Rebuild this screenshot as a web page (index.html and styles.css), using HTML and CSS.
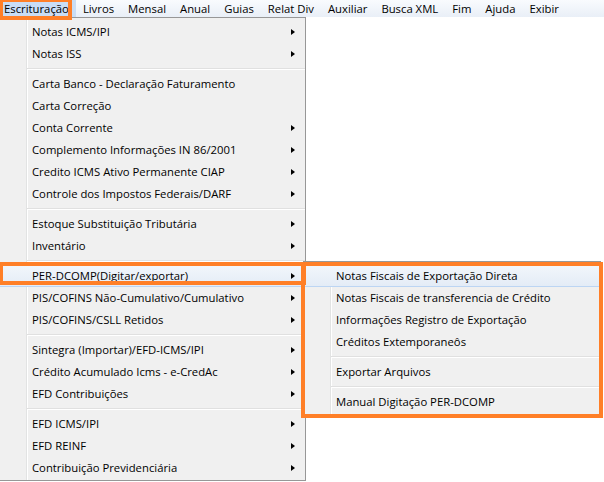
FILE: index.html
```html
<!DOCTYPE html>
<html lang="pt">
<head>
<meta charset="utf-8">
<title>Escrituração</title>
<link rel="stylesheet" href="styles.css">
</head>
<body>
<div class="app">
  <nav class="menubar">
    <span class="bar-item bar-item--active">Escrituração</span>
    <span class="bar-item">Livros</span>
    <span class="bar-item">Mensal</span>
    <span class="bar-item">Anual</span>
    <span class="bar-item">Guias</span>
    <span class="bar-item">Relat Div</span>
    <span class="bar-item">Auxiliar</span>
    <span class="bar-item">Busca XML</span>
    <span class="bar-item">Fim</span>
    <span class="bar-item">Ajuda</span>
    <span class="bar-item">Exibir</span>
  </nav>

  <div class="menu menu--main">
    <div class="row"><span class="label">Notas ICMS/IPI</span><span class="arrow"></span></div>
    <div class="row"><span class="label">Notas ISS</span><span class="arrow"></span></div>
    <div class="sep"></div>
    <div class="row"><span class="label">Carta Banco - Declaração Faturamento</span></div>
    <div class="row"><span class="label">Carta Correção</span></div>
    <div class="row"><span class="label">Conta Corrente</span><span class="arrow"></span></div>
    <div class="row"><span class="label">Complemento Informações IN 86/2001</span><span class="arrow"></span></div>
    <div class="row"><span class="label">Credito ICMS Ativo Permanente CIAP</span><span class="arrow"></span></div>
    <div class="row"><span class="label">Controle dos Impostos Federais/DARF</span><span class="arrow"></span></div>
    <div class="sep"></div>
    <div class="row"><span class="label">Estoque Substituição Tributária</span><span class="arrow"></span></div>
    <div class="row"><span class="label">Inventário</span><span class="arrow"></span></div>
    <div class="sep"></div>
    <div class="row row--hot"><span class="label">PER-DCOMP(Digitar/exportar)</span><span class="arrow"></span></div>
    <div class="row"><span class="label">PIS/COFINS Não-Cumulativo/Cumulativo</span><span class="arrow"></span></div>
    <div class="row"><span class="label">PIS/COFINS/CSLL Retidos</span><span class="arrow"></span></div>
    <div class="sep"></div>
    <div class="row"><span class="label">Sintegra (Importar)/EFD-ICMS/IPI</span><span class="arrow"></span></div>
    <div class="row"><span class="label">Crédito Acumulado Icms - e-CredAc</span><span class="arrow"></span></div>
    <div class="row"><span class="label">EFD Contribuições</span><span class="arrow"></span></div>
    <div class="sep"></div>
    <div class="row"><span class="label">EFD ICMS/IPI</span><span class="arrow"></span></div>
    <div class="row"><span class="label">EFD REINF</span><span class="arrow"></span></div>
    <div class="row"><span class="label">Contribuição Previdenciária</span><span class="arrow"></span></div>
  </div>

  <div class="menu menu--sub">
    <div class="row row--hot"><span class="label">Notas Fiscais de Exportação Direta</span></div>
    <div class="row"><span class="label">Notas Fiscais de transferencia de Crédito</span></div>
    <div class="row"><span class="label">Informações Registro de Exportação</span></div>
    <div class="row"><span class="label">Créditos Extemporaneôs</span></div>
    <div class="sep"></div>
    <div class="row"><span class="label">Exportar Arquivos</span></div>
    <div class="sep"></div>
    <div class="row"><span class="label">Manual Digitação PER-DCOMP</span></div>
  </div>

  <div class="mark mark--bar"></div>
  <div class="mark mark--item"></div>
  <div class="mark mark--sub"></div>
</div>
</body>
</html>
```

FILE: styles.css
```css
html, body {
  margin: 0;
  padding: 0;
  background: #ffffff;
}

.app {
  position: relative;
  width: 604px;
  height: 482px;
  overflow: hidden;
  font-family: "Open Sans", "Noto Sans", "DejaVu Sans", sans-serif;
  font-size: 11.3px;
  color: #000;
}

/* ---------- menu bar ---------- */
.menubar {
  display: flex;
  height: 17px;
  background: linear-gradient(#f9fbfe, #e9eff7);
}

.bar-item {
  padding: 0 7px;
  line-height: 17px;
  white-space: nowrap;
}

.bar-item--active {
  margin-left: -3px;
  background: #c9ddf5;
}

/* ---------- menus ---------- */
.menu {
  background-color: #f0f0f0;
  background-image: linear-gradient(to right,
      transparent 26px, #e2e3e3 26px, #e2e3e3 27px,
      #ffffff 27px, #ffffff 28px, transparent 28px);
  border: 1px solid #979797;
  padding: 3px 0 1px;
  box-sizing: content-box;
}

.menu--main {
  width: 305px;
  border-left: 0;
}

.menu--sub {
  position: absolute;
  left: 303px;
  top: 261px;
  width: 296px;
  padding-bottom: 3px;
}

.row {
  display: flex;
  align-items: center;
  height: 22px;
  padding-left: 32px;
  padding-right: 10px;
  padding-bottom: 1px;
  box-sizing: border-box;
  white-space: nowrap;
}

.row--hot {
  background: linear-gradient(#f2f6fb, #e3ebf6);
  box-shadow: inset 0 -1px 0 #bcd5f3;
}

.label {
  flex: 1;
}

.arrow {
  width: 0;
  height: 0;
  border-top: 3.5px solid transparent;
  border-bottom: 3.5px solid transparent;
  border-left: 4px solid #000;
}

.sep {
  height: 8px;
  margin-left: 27px;
  background: linear-gradient(transparent 3px, #e0e0e0 3px, #e0e0e0 4px,
      #ffffff 4px, #ffffff 5px, transparent 5px);
}

/* ---------- orange annotation boxes ---------- */
.mark {
  position: absolute;
  border: 4px solid #ff7f27;
  box-sizing: border-box;
}

.mark--bar {
  left: -1px;
  top: -2px;
  width: 73px;
  height: 22px;
}

.mark--item {
  left: -1px;
  top: 262px;
  width: 307px;
  height: 23px;
}

.mark--sub {
  left: 301px;
  top: 262px;
  width: 302px;
  height: 156px;
}
```
